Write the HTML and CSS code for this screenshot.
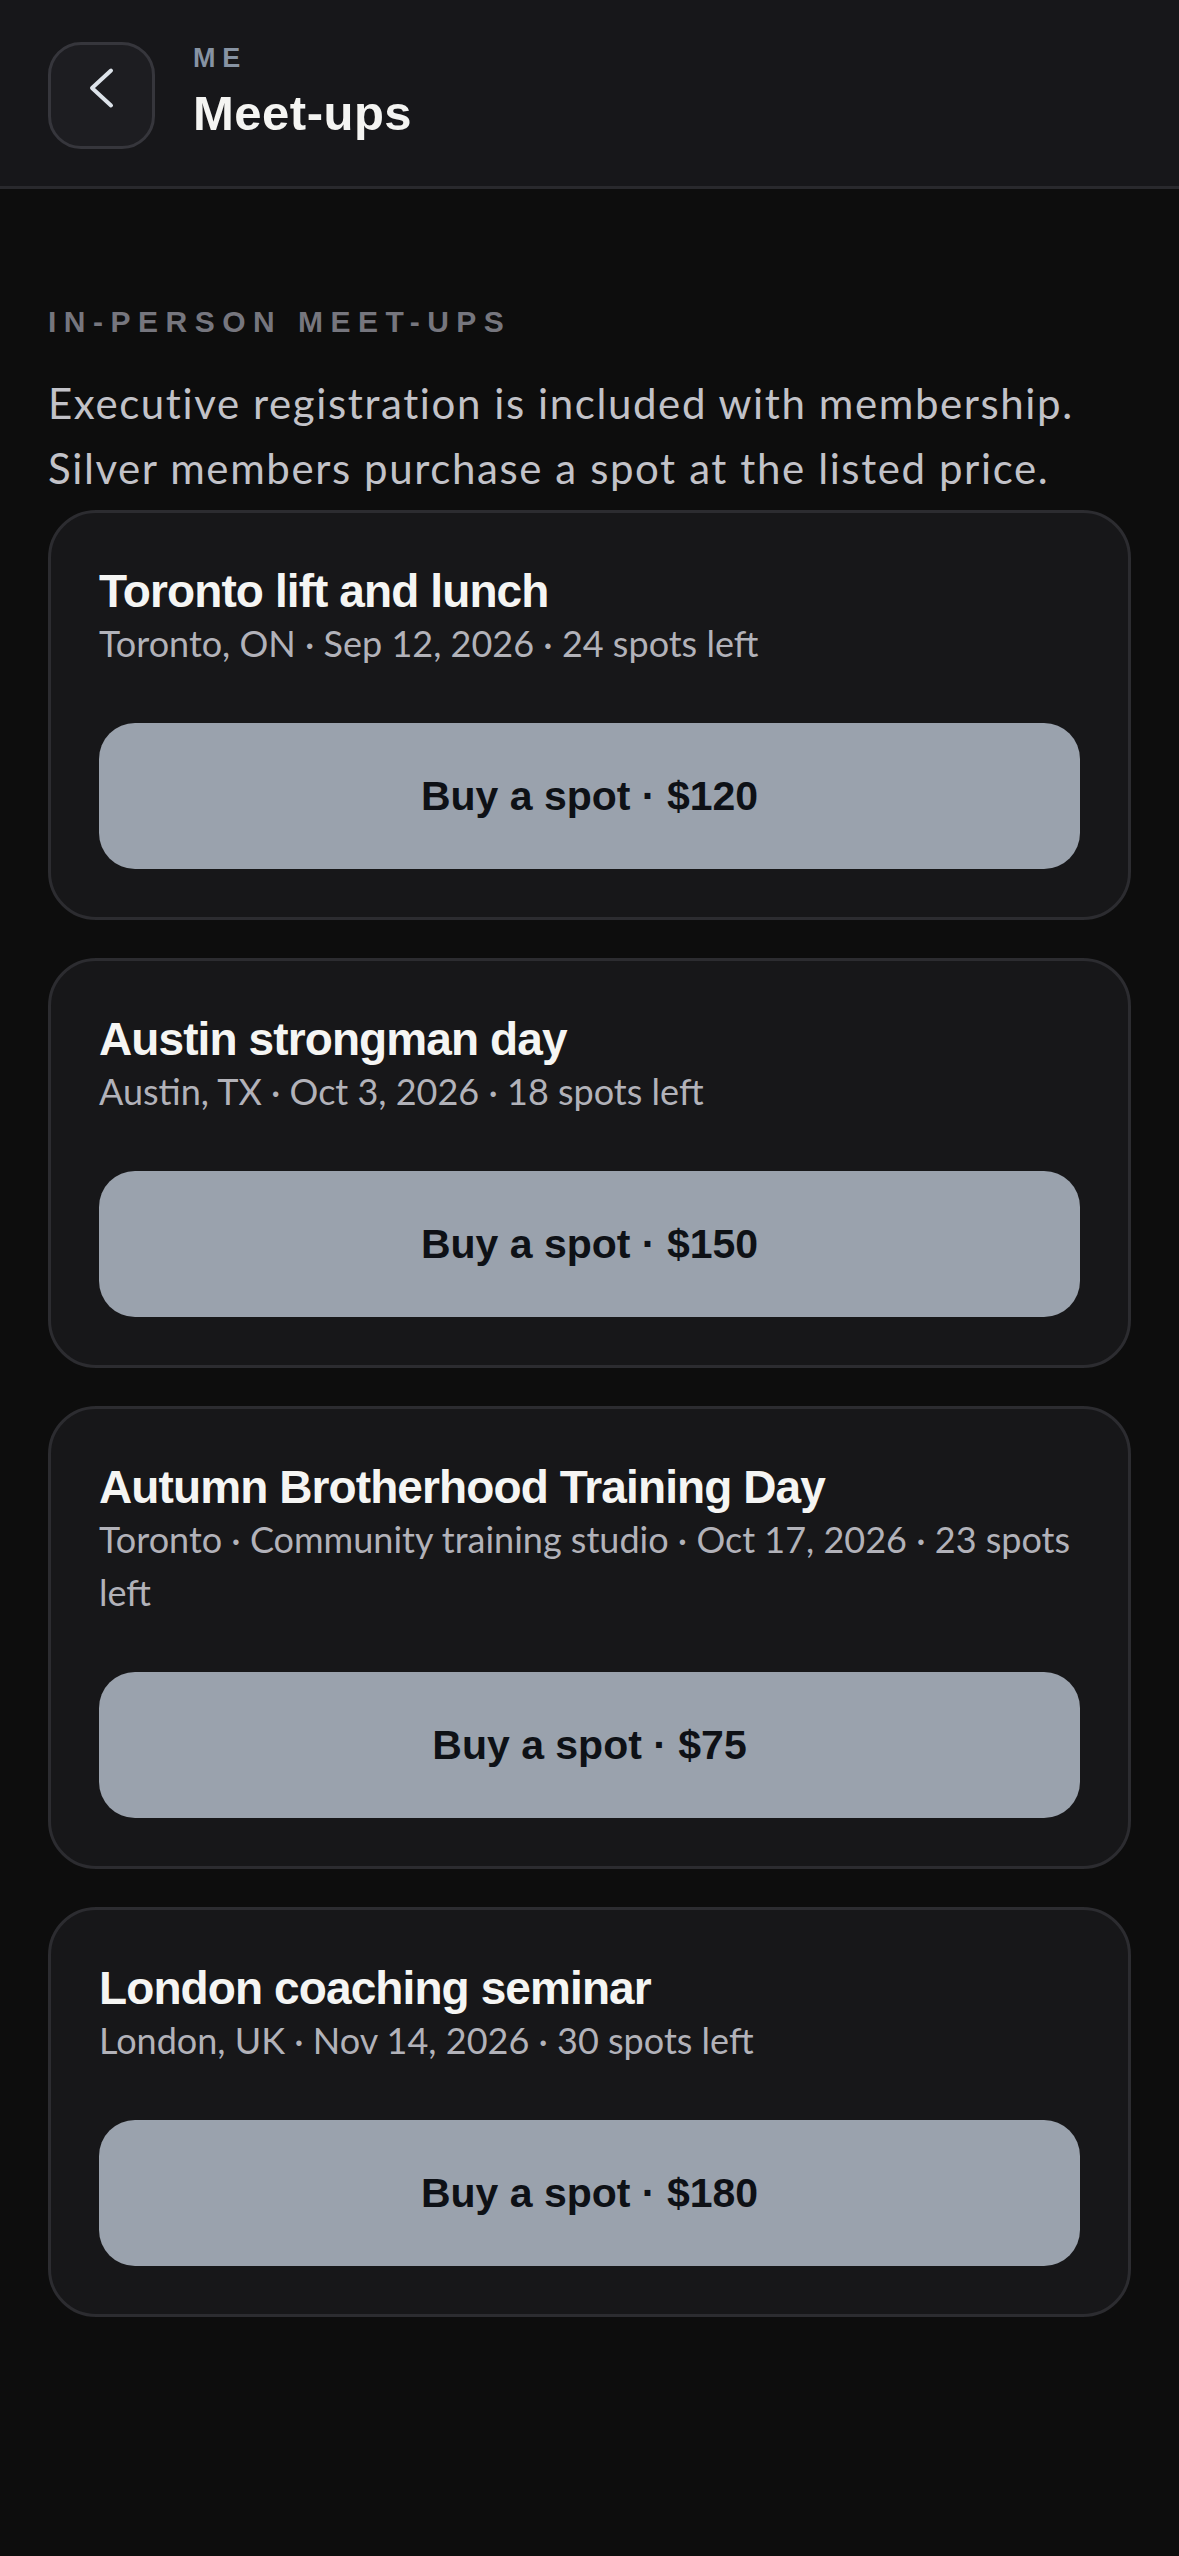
FILE: index.html
```html
<!DOCTYPE html>
<html lang="en">
<head>
<meta charset="utf-8">
<title>Meet-ups</title>
<link rel="stylesheet" href="styles.css">
</head>
<body>
<header class="topbar">
  <button class="back" aria-label="Back">
    <svg class="back-icon" viewBox="0 0 60 60" width="60" height="60" aria-hidden="true">
      <polyline points="39,4.5 20,22 39,39.5" fill="none" stroke="#dde3ea" stroke-width="4" stroke-linecap="round" stroke-linejoin="round"/>
    </svg>
  </button>
  <div class="titles">
    <div class="eyebrow">ME</div>
    <h1 class="page-title">Meet-ups</h1>
  </div>
</header>
<main class="content">
  <h2 class="section-label">IN-PERSON MEET-UPS</h2>
  <p class="intro">Executive registration is included with membership. Silver members purchase a spot at the listed price.</p>
  <div class="cards">
    <article class="card">
      <h3 class="card-title">Toronto lift and lunch</h3>
      <p class="card-meta">Toronto, ON · Sep 12, 2026 · 24 spots left</p>
      <button class="buy">Buy a spot · $120</button>
    </article>
    <article class="card">
      <h3 class="card-title">Austin strongman day</h3>
      <p class="card-meta">Austin, TX · Oct 3, 2026 · 18 spots left</p>
      <button class="buy">Buy a spot · $150</button>
    </article>
    <article class="card">
      <h3 class="card-title">Autumn Brotherhood Training Day</h3>
      <p class="card-meta">Toronto · Community training studio · Oct 17, 2026 · 23 spots left</p>
      <button class="buy">Buy a spot · $75</button>
    </article>
    <article class="card">
      <h3 class="card-title">London coaching seminar</h3>
      <p class="card-meta">London, UK · Nov 14, 2026 · 30 spots left</p>
      <button class="buy">Buy a spot · $180</button>
    </article>
  </div>
</main>
</body>
</html>
```
FILE: styles.css
```css
* { box-sizing: border-box; }

html, body {
  margin: 0;
  padding: 0;
  background: #0d0d0d;
}

body {
  min-height: 2556px;
  font-family: Lato, "Noto Sans", sans-serif;
  color: #c2c2c8;
}

.topbar {
  display: flex;
  align-items: flex-start;
  gap: 38px;
  padding: 42px 48px 37px 48px;
  background: #17171a;
  border-bottom: 3px solid #29292d;
}

.back {
  flex: none;
  width: 107px;
  height: 107px;
  padding: 0;
  border: 3px solid #36363c;
  border-radius: 33px;
  background: #1d1d21;
  display: flex;
  align-items: center;
  justify-content: center;
}

.back-icon { display: block; }

.titles {
  display: flex;
  flex-direction: column;
}

.eyebrow {
  font-family: "Liberation Sans", Arial, sans-serif;
  font-weight: 700;
  font-size: 27px;
  line-height: 32px;
  letter-spacing: 0.25em;
  color: #8793a3;
  margin-bottom: 9px;
}

.page-title {
  margin: 0;
  font-family: "Liberation Sans", Arial, sans-serif;
  font-weight: 700;
  font-size: 49px;
  line-height: 60px;
  letter-spacing: 0.5px;
  color: #f4f4f2;
}

.content {
  padding: 115px 48px 120px 48px;
}

.section-label {
  margin: 0;
  font-family: "Liberation Sans", Arial, sans-serif;
  font-weight: 700;
  font-size: 30px;
  line-height: 36px;
  letter-spacing: 0.25em;
  color: #76767e;
}

.intro {
  margin: 31px 0 9px 0;
  font-size: 42px;
  line-height: 65px;
  letter-spacing: 1.6px;
  color: #c2c2c8;
}

.cards {
  display: flex;
  flex-direction: column;
  gap: 38px;
}

.card {
  display: flex;
  flex-direction: column;
  padding: 52px 48px 48px 48px;
  background: #171719;
  border: 3px solid #2c2c30;
  border-radius: 48px;
}

.card-title {
  margin: 0;
  font-family: "Liberation Sans", Arial, sans-serif;
  font-weight: 700;
  font-size: 46px;
  line-height: 52px;
  letter-spacing: -0.9px;
  color: #f5f5f3;
}

.card-meta {
  margin: 0;
  font-size: 36px;
  line-height: 53px;
  color: #b2b2b9;
}

.buy {
  margin-top: 53px;
  height: 146px;
  width: 100%;
  border: none;
  border-radius: 36px;
  background: #9aa2ad;
  color: #0e1116;
  font-family: "Liberation Sans", Arial, sans-serif;
  font-weight: 700;
  font-size: 41px;
  display: flex;
  align-items: center;
  justify-content: center;
  padding: 0;
}
```
